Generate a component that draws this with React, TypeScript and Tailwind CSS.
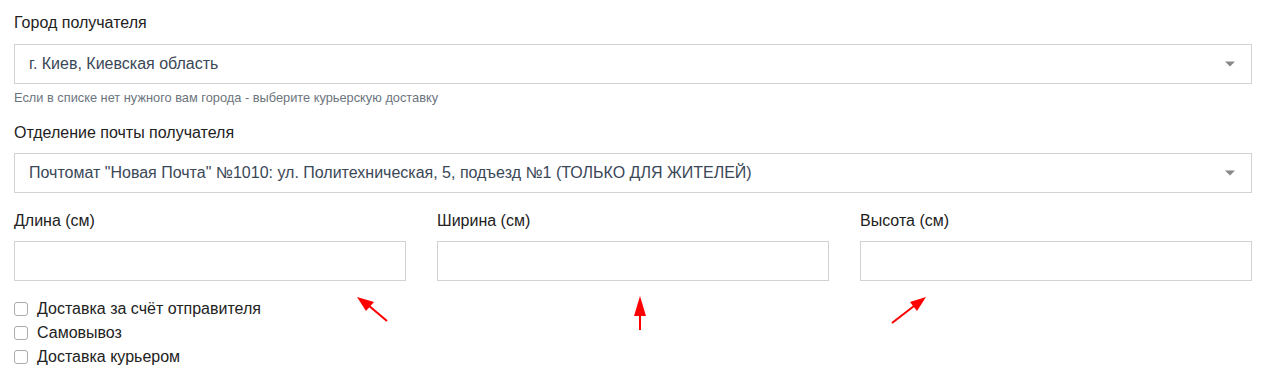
import React from 'react';

const SelectBox: React.FC<{ value: string }> = ({ value }) => (
  <div className="relative flex h-10 items-center border border-[#d2d2d2] bg-white pl-[14px] pr-10 text-[16px] text-[#3a4757]">
    <span className="truncate">{value}</span>
    <span className="absolute right-[16px] top-1/2 -translate-y-1/2 h-0 w-0 border-x-[5px] border-t-[5px] border-x-transparent border-t-[#888]" />
  </div>
);

const Field: React.FC<{ label: string }> = ({ label }) => (
  <div className="flex flex-col">
    <label className="mb-[10px] text-[16px] leading-5 text-[#222]">{label}</label>
    <input className="h-10 border border-[#d2d2d2] bg-white outline-none" />
  </div>
);

const Check: React.FC<{ label: string }> = ({ label }) => (
  <label className="flex h-6 items-center gap-[9px] text-[16px] text-[#222]">
    <span className="h-[14px] w-[14px] rounded-[3px] border border-[#aaa] bg-white" />
    {label}
  </label>
);

const App: React.FC = () => {
  return (
    <div className="relative h-[380px] w-[1274px] bg-white pl-[14px] pr-[22px] pt-[13px] font-['Liberation_Sans',Arial,sans-serif]">
      <label className="block text-[16px] leading-5 text-[#222]">Город получателя</label>
      <div className="mt-[11px]">
        <SelectBox value="г. Киев, Киевская область" />
      </div>
      <p className="mt-[6px] text-[12.8px] leading-4 text-[#6c757d]">
        Если в списке нет нужного вам города - выберите курьерскую доставку
      </p>

      <label className="mt-[17px] block text-[16px] leading-5 text-[#222]">Отделение почты получателя</label>
      <div className="mt-[10px]">
        <SelectBox value={'Почтомат "Новая Почта" №1010: ул. Политехническая, 5, подъезд №1 (ТОЛЬКО ДЛЯ ЖИТЕЛЕЙ)'} />
      </div>

      <div className="mt-[18px] grid grid-cols-3 gap-[31px]">
        <Field label="Длина (см)" />
        <Field label="Ширина (см)" />
        <Field label="Высота (см)" />
      </div>

      <div className="mt-[16px] flex flex-col">
        <Check label="Доставка за счёт отправителя" />
        <Check label="Самовывоз" />
        <Check label="Доставка курьером" />
      </div>

      {/* red annotation arrows */}
      <svg className="pointer-events-none absolute left-0 top-0" width="1274" height="380">
        <g stroke="#f00" strokeWidth="2" fill="#f00">
          <line x1="387" y1="321" x2="368" y2="305" />
          <polygon points="357,297 374,302 366,311" stroke="none" />
          <line x1="640" y1="330" x2="640" y2="314" />
          <polygon points="640,296 646,316 634,316" stroke="none" />
          <line x1="892" y1="323" x2="914" y2="306" />
          <polygon points="926,297 917,311 910,302" stroke="none" />
        </g>
      </svg>
    </div>
  );
};

export default App;
